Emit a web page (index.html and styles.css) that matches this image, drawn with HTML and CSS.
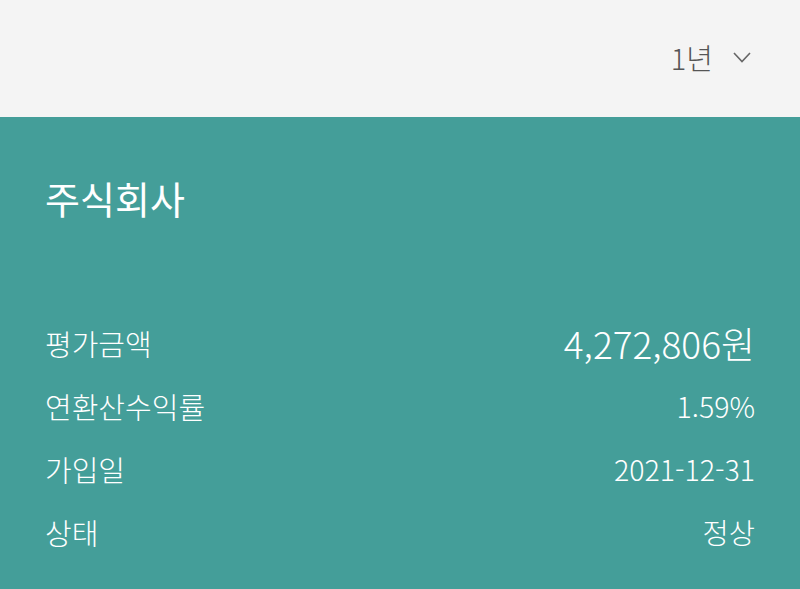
FILE: index.html
```html
<!DOCTYPE html>
<html lang="ko">
<head>
    <meta charset="UTF-8">
    <meta name="viewport" content="width=device-width, initial-scale=1.0">
    <title>주식회사</title>
    <link rel="stylesheet" href="styles.css">
</head>
<body>

    <div class="top-bar">
        <button class="period-select">
            <span>1년</span>
            <svg class="chevron" width="18" height="11" viewBox="0 0 18 11">
                <path d="M1 1 L9 9.5 L17 1" fill="none" stroke="#666" stroke-width="1.6"/>
            </svg>
        </button>
    </div>

    <div class="card">
        <h1 class="card-title">주식회사</h1>

        <div class="info-list">
            <div class="info-row">
                <span class="label">평가금액</span>
                <span class="value value-big">4,272,806원</span>
            </div>
            <div class="info-row">
                <span class="label">연환산수익률</span>
                <span class="value">1.59%</span>
            </div>
            <div class="info-row">
                <span class="label">가입일</span>
                <span class="value">2021-12-31</span>
            </div>
            <div class="info-row">
                <span class="label">상태</span>
                <span class="value">정상</span>
            </div>
        </div>
    </div>

</body>
</html>
```

FILE: styles.css
```css
* {
    box-sizing: border-box;
    margin: 0;
    padding: 0;
}

body {
    font-family: "Noto Sans CJK KR", "Noto Sans", sans-serif;
    background-color: #449e99;
    height: 589px;
    overflow: hidden;
}

.top-bar {
    height: 117px;
    background-color: #f4f4f4;
    display: flex;
    justify-content: flex-end;
    align-items: center;
    padding-right: 49px;
}

.period-select {
    display: flex;
    align-items: center;
    gap: 20px;
    background: none;
    border: none;
    font-family: inherit;
    font-size: 29px;
    font-weight: 300;
    color: #555;
    padding-bottom: 4px;
}

.chevron {
    margin-top: 2px;
}

.card {
    padding: 56px 45px 0 45px;
    color: #fff;
}

.card-title {
    font-size: 38px;
    font-weight: 400;
    line-height: 50px;
}

.info-list {
    margin-top: 88px;
    display: flex;
    flex-direction: column;
}

.info-row {
    display: flex;
    justify-content: space-between;
    align-items: center;
    height: 63px;
}

.label {
    font-size: 29px;
    font-weight: 300;
}

.value {
    font-size: 28.5px;
    font-weight: 300;
}

.value-big {
    font-size: 37px;
}
```
